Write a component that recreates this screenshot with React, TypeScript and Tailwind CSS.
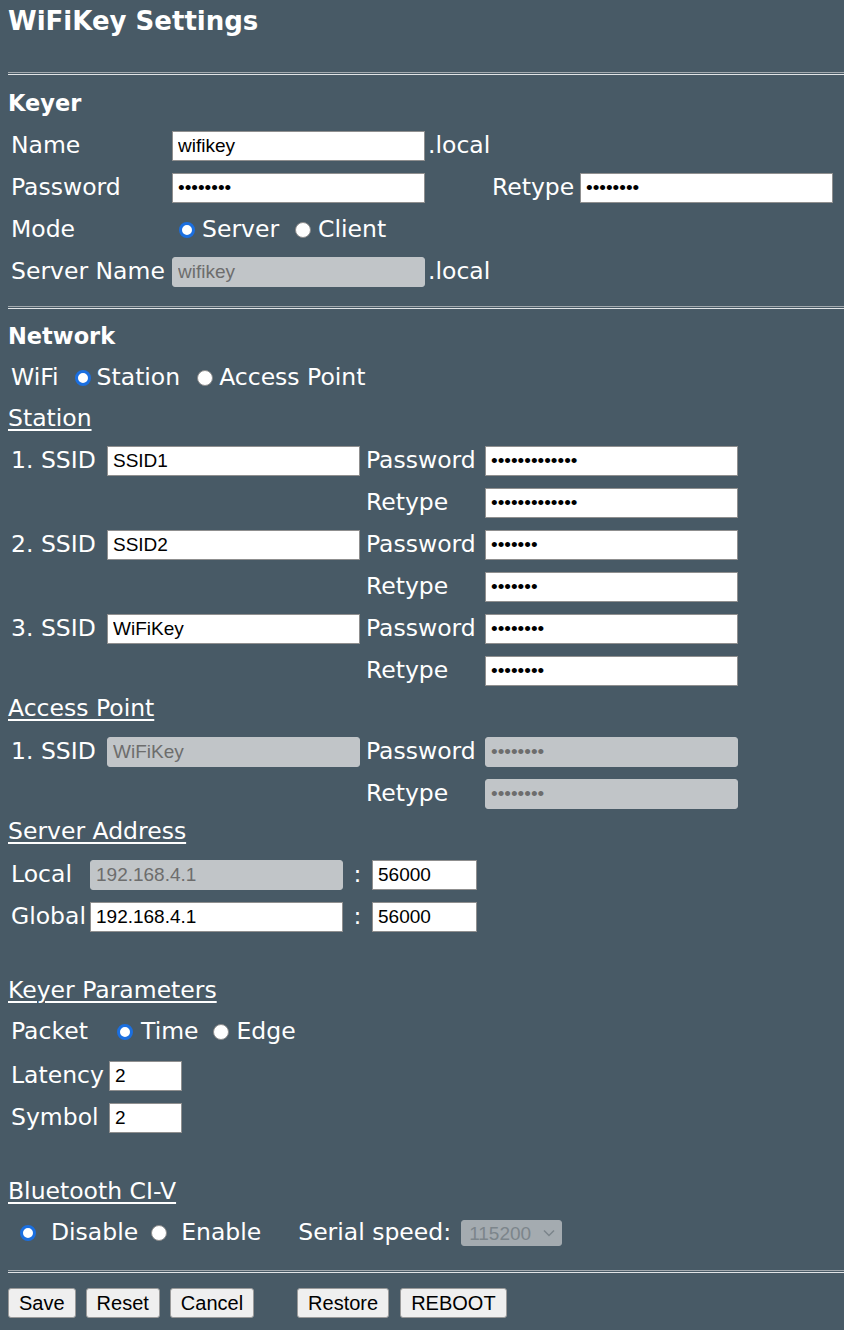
import React from "react";

const labelFont = "font-['DejaVu_Sans',sans-serif]";
const inputFont = "font-['Liberation_Sans',Arial,sans-serif]";

function Hr({ className = "" }: { className?: string }) {
  return (
    <div
      className={`h-[3px] border-t border-b border-t-[#a3aaaf] border-b-[#e1e4e6] ${className}`}
    />
  );
}

function Radio({ checked }: { checked?: boolean }) {
  return checked ? (
    <span className="inline-block h-[16px] w-[16px] shrink-0 rounded-full border-[3px] border-[#1b6fe0] bg-white" />
  ) : (
    <span className="inline-block h-[16px] w-[16px] shrink-0 rounded-full border border-[#8c8c8c] bg-white" />
  );
}

type InputProps = {
  value: string;
  w?: string;
  type?: string;
  disabled?: boolean;
};

function Field({ value, w = "w-[253px]", type = "text", disabled }: InputProps) {
  const base = `${w} h-[30px] shrink-0 px-[5px] text-[19px] leading-none outline-none ${inputFont}`;
  const look = disabled
    ? "rounded-[3px] border border-[#c1c5c8] bg-[#c1c5c8] text-[#6d6d6d]"
    : "border border-[#8f8f8f] bg-white text-black";
  return (
    <input
      type={type}
      defaultValue={value}
      disabled={disabled}
      className={`${base} ${look}`}
    />
  );
}

function Heading({ children, className = "" }: { children: React.ReactNode; className?: string }) {
  return (
    <div className={`flex items-center text-[22.5px] font-bold ${className}`}>{children}</div>
  );
}

function Sub({ children, className = "" }: { children: React.ReactNode; className?: string }) {
  return (
    <div className={`flex h-[34px] items-center ${className}`}>
      <span className="underline decoration-[1.5px] underline-offset-[3px]">{children}</span>
    </div>
  );
}

function Row({ children, className = "" }: { children: React.ReactNode; className?: string }) {
  return <div className={`flex h-[42px] items-center whitespace-nowrap ${className}`}>{children}</div>;
}

function Btn({ children, className = "" }: { children: React.ReactNode; className?: string }) {
  return (
    <button
      type="button"
      className={`h-[30px] rounded-[3px] border border-[#9a9a9a] bg-[#efefef] px-[10px] text-[20px] leading-none text-black ${inputFont} ${className}`}
    >
      {children}
    </button>
  );
}

function SsidRow({ n, ssid, pw, disabled }: { n: number; ssid: string; pw: string; disabled?: boolean }) {
  return (
    <>
      <Row>
        <span className="w-[99px] pl-[3px]">{n}. SSID</span>
        <Field value={ssid} disabled={disabled} />
        <span className="w-[125px] pl-[6px]">Password</span>
        <Field value={pw} type="password" disabled={disabled} />
      </Row>
      <Row>
        <span className="w-[352px]" />
        <span className="w-[125px] pl-[6px]">Retype</span>
        <Field value={pw} type="password" disabled={disabled} />
      </Row>
    </>
  );
}

export default function App() {
  return (
    <div className={`min-h-screen w-full overflow-hidden bg-[#485a66] pl-2 text-[23.5px] text-white ${labelFont}`}>
      <div className="flex h-[42px] items-center text-[26px] font-bold">WiFiKey Settings</div>

      <Hr className="mt-[30px]" />

      {/* Keyer */}
      <Heading className="mt-[9px] h-[40px]">Keyer</Heading>
      <div className="mt-[1px]">
        <Row>
          <span className="w-[164px] pl-[3px]">Name</span>
          <Field value="wifikey" />
          <span className="pl-[3px]">.local</span>
        </Row>
        <Row>
          <span className="w-[164px] pl-[3px]">Password</span>
          <Field value="wifikey1" type="password" />
          <span className="w-[64px]" />
          <span className="w-[91px] pl-[3px]">Retype</span>
          <Field value="wifikey1" type="password" />
        </Row>
        <Row>
          <span className="w-[164px] pl-[3px]">Mode</span>
          <span className="ml-[7px] flex items-center">
            <Radio checked />
          </span>
          <span className="ml-[7px]">Server</span>
          <span className="ml-[16px] flex items-center">
            <Radio />
          </span>
          <span className="ml-[7px]">Client</span>
        </Row>
        <Row>
          <span className="w-[164px] pl-[3px]">Server Name</span>
          <Field value="wifikey" disabled />
          <span className="pl-[3px]">.local</span>
        </Row>
      </div>

      <Hr className="mt-[13px]" />

      {/* Network */}
      <Heading className="mt-[8px] h-[40px]">Network</Heading>
      <Row>
        <span className="pl-[3px]">WiFi</span>
        <span className="ml-[16px] flex items-center">
          <Radio checked />
        </span>
        <span className="ml-[6px]">Station</span>
        <span className="ml-[17px] flex items-center">
          <Radio />
        </span>
        <span className="ml-[6px]">Access Point</span>
      </Row>

      <Sub className="h-[40px]">Station</Sub>
      <div className="mt-[1px]">
        <SsidRow n={1} ssid="SSID1" pw="password12345" />
        <SsidRow n={2} ssid="SSID2" pw="passwrd" />
        <SsidRow n={3} ssid="WiFiKey" pw="wifikey1" />
      </div>

      <Sub>Access Point</Sub>
      <div className="mt-[5px]">
        <SsidRow n={1} ssid="WiFiKey" pw="wifikey1" disabled />
      </div>

      <Sub>Server Address</Sub>
      <div className="mt-[5px]">
        <Row>
          <span className="w-[82px] pl-[3px]">Local</span>
          <Field value="192.168.4.1" disabled />
          <span className="w-[29px] text-center">:</span>
          <Field value="56000" w="w-[105px]" />
        </Row>
        <Row>
          <span className="w-[82px] pl-[3px]">Global</span>
          <Field value="192.168.4.1" />
          <span className="w-[29px] text-center">:</span>
          <Field value="56000" w="w-[105px]" />
        </Row>
      </div>

      {/* Keyer parameters */}
      <Sub className="mt-[36px]">Keyer Parameters</Sub>
      <Row className="mt-[3px]">
        <span className="w-[101px] pl-[3px]">Packet</span>
        <span className="ml-[8px] flex items-center">
          <Radio checked />
        </span>
        <span className="ml-[8px]">Time</span>
        <span className="ml-[14px] flex items-center">
          <Radio />
        </span>
        <span className="ml-[8px]">Edge</span>
      </Row>
      <Row className="mt-[2px]">
        <span className="w-[101px] pl-[3px]">Latency</span>
        <Field value="2" w="w-[73px]" />
      </Row>
      <Row>
        <span className="w-[101px] pl-[3px]">Symbol</span>
        <Field value="2" w="w-[73px]" />
      </Row>

      {/* Bluetooth */}
      <Sub className="mt-[36px]">Bluetooth CI-V</Sub>
      <Row className="mt-[3px]">
        <span className="ml-[12px] flex items-center">
          <Radio checked />
        </span>
        <span className="ml-[15px]">Disable</span>
        <span className="ml-[13px] flex items-center">
          <Radio />
        </span>
        <span className="ml-[14px]">Enable</span>
        <span className="ml-[37px]">Serial speed:</span>
        <div
          className={`ml-[10px] flex h-[26px] w-[101px] items-center justify-between rounded-[3px] border border-[#a4abb0] bg-[#a4abb0] pl-[7px] pr-[6px] text-[19px] leading-none text-[#7c858b] ${inputFont}`}
        >
          <span>115200</span>
          <svg width="12" height="8" viewBox="0 0 12 8" fill="none">
            <path d="M1 1.5l5 5 5-5" stroke="#7c858b" strokeWidth="1.5" />
          </svg>
        </div>
      </Row>

      <Hr className="mt-[16px]" />

      <div className="mt-[15px] flex items-center pb-[12px]">
        <Btn>Save</Btn>
        <Btn className="ml-[10px]">Reset</Btn>
        <Btn className="ml-[10px]">Cancel</Btn>
        <Btn className="ml-[43px]">Restore</Btn>
        <Btn className="ml-[11px]">REBOOT</Btn>
      </div>
    </div>
  );
}
